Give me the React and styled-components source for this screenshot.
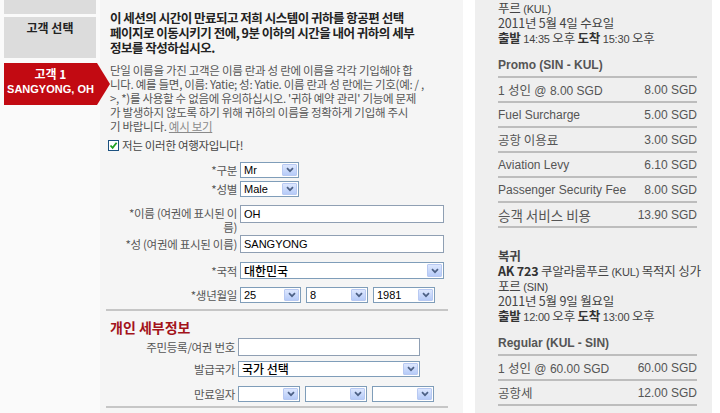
import React from "react";
import styled, { createGlobalStyle } from "styled-components";

const GlobalStyle = createGlobalStyle`
  html, body {
    margin: 0;
    padding: 0;
    background: #fff;
  }
  body {
    font-family: "Liberation Sans", "Noto Sans CJK KR", sans-serif;
    color: #444;
  }
`;

const Page = styled.div`
  display: flex;
  width: 720px;
  height: 413px;
  overflow: hidden;
  background: #fff;
`;

/* ---------- left steps ---------- */

const Sidebar = styled.div`
  width: 100px;
  flex-shrink: 0;
  box-sizing: border-box;
  padding-left: 4px;
  background: #fafafa;
  position: relative;
  z-index: 1;
`;

const StepBox = styled.div`
  width: 92px;
  height: ${p => p.$h}px;
  margin-bottom: ${p => p.$mb}px;
  background: #dcdcdc;
  box-sizing: border-box;
  padding-top: 4px;
  text-align: center;
  font: bold 12px/14px "Noto Sans CJK KR", "Liberation Sans", sans-serif;
  color: #222;
`;

const ActiveStep = styled.div`
  width: 106px;
  height: 42px;
  background: #c20a12;
  clip-path: polygon(0 0, 93px 0, 106px 50%, 93px 100%, 0 100%);
  box-sizing: border-box;
  padding: 3px 13px 0 0;
  text-align: center;
  color: #fff;
  font-weight: bold;
`;

const StepTitle = styled.div`
  font: bold 12px/16px "Noto Sans CJK KR", "Liberation Sans", sans-serif;
`;

const StepName = styled.div`
  font: bold 11px/14px "Liberation Sans", sans-serif;
`;

/* ---------- main form ---------- */

const Main = styled.div`
  width: 363px;
  flex-shrink: 0;
  box-sizing: border-box;
  padding: 10px 0 0 8px;
  background: #f5f5f5;
`;

const Notice = styled.div`
  padding-left: 2px;
  font: bold 12.5px/15px "Noto Sans CJK KR", "Liberation Sans", sans-serif;
  color: #222;
  letter-spacing: -0.5px;
`;

const Hint = styled.p`
  margin: 8px 0 0;
  padding-left: 2px;
  font: 11.5px/14px "Noto Sans CJK KR", "Liberation Sans", sans-serif;
  color: #555;
  letter-spacing: -0.3px;
`;

const HintLink = styled.a`
  color: #8a8a8a;
  text-decoration: underline;
`;

const CheckRow = styled.label`
  display: flex;
  align-items: center;
  gap: 3px;
  margin-top: 5px;
  height: 14px;
  font: 11.5px/14px "Noto Sans CJK KR", "Liberation Sans", sans-serif;
  color: #444;
  letter-spacing: -0.3px;
`;

const CheckBox = styled.span`
  display: inline-flex;
  align-items: center;
  justify-content: center;
  width: 11px;
  height: 11px;
  box-sizing: border-box;
  border: 1px solid #1c5180;
  background: #fff;
`;

const FormRow = styled.div`
  display: flex;
  align-items: ${p => (p.$top ? "flex-start" : "center")};
  margin-top: ${p => p.$mt}px;
`;

const Label = styled.div`
  width: ${p => p.$w || 129}px;
  padding-right: 3px;
  flex-shrink: 0;
  text-align: right;
  font: 11.5px/14px "Noto Sans CJK KR", "Liberation Sans", sans-serif;
  color: #555;
  letter-spacing: -0.3px;
  padding-top: ${p => (p.$top ? 1 : 0)}px;
`;

const Fields = styled.div`
  display: flex;
  gap: 5px;
`;

const TextInput = styled.input`
  width: ${p => p.$w}px;
  height: 18px;
  box-sizing: border-box;
  border: 1px solid #8f9fb3;
  background: #fff;
  padding: 0 3px;
  font: 11px "Liberation Sans", sans-serif;
  color: #000;
  outline: none;
`;

const SelectBox = styled.div`
  display: flex;
  align-items: center;
  justify-content: space-between;
  width: ${p => p.$w}px;
  height: ${p => p.$h || 16}px;
  box-sizing: border-box;
  border: 1px solid #7f9db9;
  background: #fff;
  padding-left: 3px;
  font-size: ${p => (p.$big ? "12px" : "11px")};
  font-family: ${p => (p.$big ? '"Noto Sans CJK KR", sans-serif' : '"Liberation Sans", sans-serif')};
  font-weight: ${p => (p.$big ? 500 : 400)};
  line-height: 14px;
  color: #000;
  white-space: nowrap;
`;

const DropBtn = styled.span`
  display: flex;
  align-items: center;
  justify-content: center;
  width: 15px;
  height: ${p => (p.$h ? p.$h - 4 : 12)}px;
  margin-right: 1px;
  box-sizing: border-box;
  border: 1px solid #b8c9f2;
  border-radius: 1px;
  background: linear-gradient(#dde7fe, #b6cbf8);
  flex-shrink: 0;
`;

const Rule = styled.div`
  margin: ${p => p.$mt}px 15px 0 -2px;
  border-top: 2px solid #c6c6c6;
`;

const SectionTitle = styled.h3`
  margin: 8px 0 0 2px;
  font: bold 14px/16px "Noto Sans CJK KR", "Liberation Sans", sans-serif;
  color: #a3131a;
`;

/* ---------- right summary ---------- */

const Gap = styled.div`
  width: 12px;
  flex-shrink: 0;
`;

const Summary = styled.div`
  width: 237px;
  flex-shrink: 0;
  box-sizing: border-box;
  padding: 0 15px 0 23px;
  background: #efefef;
`;

const Trip = styled.div`
  margin-top: ${p => p.$mt}px;
  font: 12.5px/15px "Noto Sans CJK KR", "Liberation Sans", sans-serif;
  color: #444;
  letter-spacing: -0.2px;
`;

const TripLine = styled.div`
  white-space: nowrap;
  font-weight: ${p => (p.$bold ? "bold" : "normal")};
`;

const Small = styled.span`
  font: 11px "Liberation Sans", sans-serif;
`;

const Strong = styled.span`
  font-weight: bold;
  color: #333;
`;

const FareHead = styled.div`
  margin-top: 12px;
  padding-bottom: 3px;
  border-bottom: 2px solid #bdbdbd;
  font: bold 12px/16px "Liberation Sans", sans-serif;
  color: #555;
`;

const FareRow = styled.div`
  display: flex;
  align-items: center;
  justify-content: space-between;
  height: 23px;
  border-bottom: 2px solid #bdbdbd;
  font: 12px "Liberation Sans", "Noto Sans CJK KR", sans-serif;
  color: #555;
`;

const Kor = styled.span`
  font: ${p => (p.$big ? "13.5px" : "12.5px")} "Noto Sans CJK KR", sans-serif;
`;

const Chevron = () => (
  <svg width="8" height="6" viewBox="0 0 8 6">
    <path d="M1 1.2 L4 4.2 L7 1.2" fill="none" stroke="#4d6185" strokeWidth="1.7" />
  </svg>
);

const Select = ({ w, h, big, children }) => (
  <SelectBox $w={w} $h={h} $big={big}>
    <span>{children}</span>
    <DropBtn $h={h}>
      <Chevron />
    </DropBtn>
  </SelectBox>
);

const fares1 = [
  ["1 성인 @ 8.00 SGD", "8.00 SGD"],
  ["Fuel Surcharge", "5.00 SGD"],
  ["공항 이용료", "3.00 SGD"],
  ["Aviation Levy", "6.10 SGD"],
  ["Passenger Security Fee", "8.00 SGD"],
  ["승객 서비스 비용", "13.90 SGD", true]
];

const fares2 = [
  ["1 성인 @ 60.00 SGD", "60.00 SGD"],
  ["공항세", "12.00 SGD"]
];

const hasHangul = s => /[\uac00-\ud7a3]/.test(s);

const FareName = ({ text, big }) => {
  if (!hasHangul(text)) return <span>{text}</span>;
  const m = text.match(/^(1 )?([^@]+?)( @.*)?$/);
  return (
    <span>
      {m[1]}
      <Kor $big={big}>{m[2]}</Kor>
      {m[3]}
    </span>
  );
};

export default function App() {
  return (
    <Page>
      <GlobalStyle />
      <Sidebar>
        <StepBox $h={14} $mb={3} />
        <StepBox $h={41} $mb={5}>고객 선택</StepBox>
        <ActiveStep>
          <StepTitle>고객 1</StepTitle>
          <StepName>SANGYONG, OH</StepName>
        </ActiveStep>
      </Sidebar>

      <Main>
        <Notice>
          이 세션의 시간이 만료되고 저희 시스템이 귀하를 항공편 선택
          <br />
          페이지로 이동시키기 전에, 9분 이하의 시간을 내어 귀하의 세부
          <br />
          정보를 작성하십시오.
        </Notice>
        <Hint>
          단일 이름을 가진 고객은 이름 란과 성 란에 이름을 각각 기입해야 합
          <br />
          니다. 예를 들면, 이름: Yatie; 성: Yatie. 이름 란과 성 란에는 기호(예: / ,
          <br />
          &gt;, *)를 사용할 수 없음에 유의하십시오. '귀하 예약 관리' 기능에 문제
          <br />
          가 발생하지 않도록 하기 위해 귀하의 이름을 정확하게 기입해 주시
          <br />
          기 바랍니다. <HintLink>예시 보기</HintLink>
        </Hint>

        <CheckRow>
          <CheckBox>
            <svg width="9" height="9" viewBox="0 0 9 9">
              <path d="M1.5 4.5 L3.6 6.8 L7.6 1.8" fill="none" stroke="#21a121" strokeWidth="1.8" />
            </svg>
          </CheckBox>
          저는 이러한 여행자입니다!
        </CheckRow>

        <FormRow $mt={10}>
          <Label>*구분</Label>
          <Select w={59}>Mr</Select>
        </FormRow>
        <FormRow $mt={3}>
          <Label>*성별</Label>
          <Select w={59}>Male</Select>
        </FormRow>
        <FormRow $mt={8} $top>
          <Label $top>
            *이름 (여권에 표시된 이
            <br />
            름)
          </Label>
          <TextInput $w={204} readOnly defaultValue="OH" />
        </FormRow>
        <FormRow $mt={1}>
          <Label>*성 (여권에 표시된 이름)</Label>
          <TextInput $w={204} readOnly defaultValue="SANGYONG" />
        </FormRow>
        <FormRow $mt={9}>
          <Label>*국적</Label>
          <Select w={204} h={17} big>대한민국</Select>
        </FormRow>
        <FormRow $mt={8}>
          <Label>*생년월일</Label>
          <Fields>
            <Select w={61}>25</Select>
            <Select w={62}>8</Select>
            <Select w={62}>1981</Select>
          </Fields>
        </FormRow>

        <Rule $mt={6} />
        <SectionTitle>개인 세부정보</SectionTitle>

        <FormRow $mt={3}>
          <Label $w={127}>주민등록/여권 번호</Label>
          <TextInput $w={182} readOnly defaultValue="" />
        </FormRow>
        <FormRow $mt={5}>
          <Label $w={127}>발급국가</Label>
          <Select w={182} h={16} big>국가 선택</Select>
        </FormRow>
        <FormRow $mt={9}>
          <Label $w={127}>만료일자</Label>
          <Fields>
            <Select w={62} />
            <Select w={62} />
            <Select w={62} />
          </Fields>
        </FormRow>
        <Rule $mt={4} />
      </Main>

      <Gap />

      <Summary>
        <Trip $mt={-15}>
          <TripLine>
            <Strong>AK 712</Strong> 싱가포르 <Small>(SIN)</Small> 목적지 쿠알라룸
          </TripLine>
          <TripLine>
            푸르 <Small>(KUL)</Small>
          </TripLine>
          <TripLine>2011년 5월 4일 수요일</TripLine>
          <TripLine>
            <Strong>출발</Strong> <Small>14:35</Small> 오후 <Strong>도착</Strong> <Small>15:30</Small> 오후
          </TripLine>
        </Trip>
        <FareHead>Promo (SIN - KUL)</FareHead>
        {fares1.map(([name, amount, big]) => (
          <FareRow key={name}>
            <FareName text={name} big={big} />
            <span>{amount}</span>
          </FareRow>
        ))}

        <Trip $mt={20}>
          <TripLine $bold>복귀</TripLine>
          <TripLine>
            <Strong>AK 723</Strong> 쿠알라룸푸르 <Small>(KUL)</Small> 목적지 싱가
          </TripLine>
          <TripLine>
            포르 <Small>(SIN)</Small>
          </TripLine>
          <TripLine>2011년 5월 9일 월요일</TripLine>
          <TripLine>
            <Strong>출발</Strong> <Small>12:00</Small> 오후 <Strong>도착</Strong> <Small>13:00</Small> 오후
          </TripLine>
        </Trip>
        <FareHead>Regular (KUL - SIN)</FareHead>
        {fares2.map(([name, amount]) => (
          <FareRow key={name}>
            <FareName text={name} />
            <span>{amount}</span>
          </FareRow>
        ))}
      </Summary>
    </Page>
  );
}
